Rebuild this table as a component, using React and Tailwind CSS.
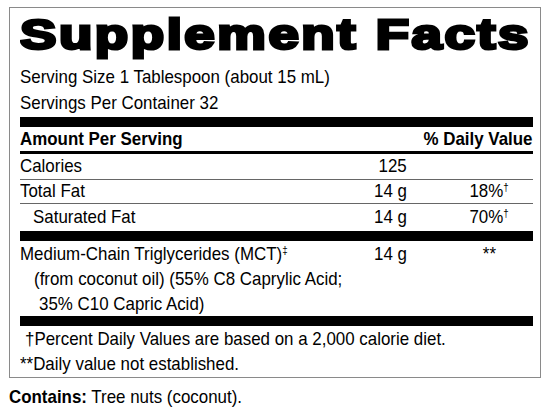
import React from "react";

// condensed look: Liberation Sans squeezed horizontally
const T = ({ children, origin = "origin-left", className = "" }) => (
  <span className={`inline-block whitespace-nowrap scale-x-[0.89] ${origin} ${className}`}>{children}</span>
);

const Dagger = ({ char = "†" }) => <sup className="text-[11px] -top-[0.55em]">{char}</sup>;

const Row = ({ name, amount, dv, className = "", indent = false }) => (
  <div className={`flex items-center ${className}`}>
    <div className={`flex-1 min-w-0 ${indent ? "pl-[13px]" : ""}`}>
      <T>{name}</T>
    </div>
    <div className="w-[60px] shrink-0 text-right">
      <T origin="origin-right">{amount}</T>
    </div>
    <div className="w-[87px] shrink-0 ml-[39px] text-center">
      <T origin="origin-center">{dv}</T>
    </div>
  </div>
);

const App = () => {
  return (
    <div className="w-[550px] h-[415px] bg-white text-black font-['Liberation_Sans',Arial,sans-serif] text-[19px] pt-[7px]">
      <div className="ml-[9px] w-[532px] border border-[#8a8a8a] pl-[10px] pr-[7px]">
        {/* Title */}
        <div className="h-[56px] leading-[52px] overflow-hidden">
          <span className="inline-block origin-left scale-x-[1.27] font-bold text-[43px] tracking-[2px] [-webkit-text-stroke:3px_black] whitespace-nowrap">
            Supplement Facts
          </span>
        </div>
        <div className="leading-[26px]">
          <T>Serving Size 1 Tablespoon (about 15 mL)</T>
        </div>
        <div className="leading-[26px]">
          <T>Servings Per Container 32</T>
        </div>
        <div className="h-[10px] bg-black mt-[1px]" />

        {/* Header */}
        <div className="flex items-center h-[24px] font-bold">
          <div className="flex-1 min-w-0">
            <T>Amount Per Serving</T>
          </div>
          <div>
            <T origin="origin-right">% Daily Value</T>
          </div>
        </div>
        <div className="h-[3px] bg-black" />

        <Row name="Calories" amount="125" dv="" className="h-[25px]" />
        <div className="h-px bg-[#666]" />
        <Row
          name="Total Fat"
          amount="14 g"
          dv={<>18%<Dagger /></>}
          className="h-[23px]"
        />
        <div className="h-px bg-[#666]" />
        <Row
          name="Saturated Fat"
          amount="14 g"
          dv={<>70%<Dagger /></>}
          className="h-[27px]"
          indent
        />
        <div className="h-[10px] bg-black" />

        {/* MCT */}
        <div className="flex items-start leading-[25px]">
          <div className="flex-1 min-w-0">
            <div>
              <T>
                Medium-Chain Triglycerides (MCT)<Dagger char="‡" />
              </T>
            </div>
            <div className="pl-[14px]">
              <T>(from coconut oil) (55% C8 Caprylic Acid;</T>
            </div>
            <div className="pl-[19px]">
              <T>35% C10 Capric Acid)</T>
            </div>
          </div>
          <div className="w-[60px] shrink-0 text-right">
            <T origin="origin-right">14 g</T>
          </div>
          <div className="w-[87px] shrink-0 ml-[39px] text-center">
            <T origin="origin-center">**</T>
          </div>
        </div>
        <div className="h-[10px] bg-black" />

        {/* Footnotes */}
        <div className="leading-[25px] pb-px">
          <div className="pl-[5px]">
            <T>†Percent Daily Values are based on a 2,000 calorie diet.</T>
          </div>
          <div>
            <T>**Daily value not established.</T>
          </div>
        </div>
      </div>

      <div className="ml-[9px] mt-[6px] leading-[25px]">
        <T>
          <span className="font-bold">Contains:</span> Tree nuts (coconut).
        </T>
      </div>
    </div>
  );
};

export default App;
